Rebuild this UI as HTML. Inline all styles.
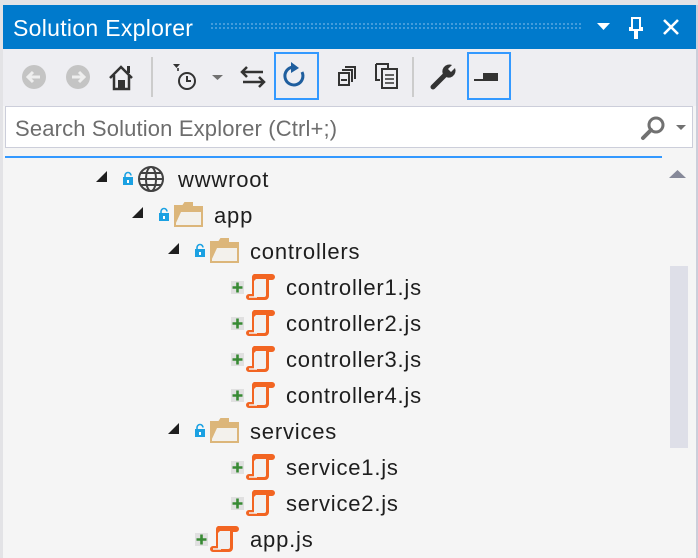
<!DOCTYPE html>
<html><head><meta charset="utf-8"><style>
*{margin:0;padding:0;box-sizing:border-box}
body{width:698px;height:558px;overflow:hidden;background:#e3e3e6;font-family:"Liberation Sans",sans-serif;position:relative}
.a{position:absolute}
.t{position:absolute;font-size:22px;letter-spacing:0.8px;color:#1e1e1e;line-height:24px;white-space:nowrap}
</style></head><body>
<div class="a" style="left:3px;top:5px;width:693px;height:553px;background:#f5f5f5"></div>
<div class="a" style="left:696px;top:5px;width:2px;height:553px;background:#ccceda"></div>
<div class="a" style="left:3px;top:5px;width:693px;height:44px;background:#007acc"></div>
<div class="t" style="left:13px;top:16px;color:#fff;font-size:23px;letter-spacing:0.3px">Solution Explorer</div>
<div class="a" style="left:210px;top:22px;width:372px;height:8px;background-image:radial-gradient(circle,#5aa8e0 0.8px,transparent 1px);background-size:4px 4px"></div>
<svg class="a" style="left:590px;top:10px" width="108" height="36">
<path d="M7 13h13l-6.5 7z" fill="#fff"/>
<path d="M42 8h8v10h2v2h-5v8h-2v-8h-5v-2h2z" fill="none" stroke="#fff" stroke-width="2"/>
<path d="M74 10l14 14M88 10l-14 14" stroke="#fff" stroke-width="2.6"/>
</svg>
<div class="a" style="left:3px;top:49px;width:693px;height:57px;background:#eeeef2"></div>
<svg class="a" style="left:3px;top:49px" width="693" height="57">
<circle cx="31" cy="28" r="12" fill="#c4c4c4"/><path d="M37 28h-11M30 23l-5 5 5 5" stroke="#eee" stroke-width="3" fill="none"/>
<circle cx="75" cy="28" r="12" fill="#c4c4c4"/><path d="M69 28h11M76 23l5 5-5 5" stroke="#eee" stroke-width="3" fill="none"/>
<path d="M107 29l11-11 11 11M111 26v14h15V26" fill="none" stroke="#333" stroke-width="2.5"/><rect x="115" y="31" width="7" height="9" fill="#333"/><rect x="124" y="17" width="3" height="7" fill="#333"/>
<rect x="148" y="8" width="2" height="40" fill="#ccc"/>
<path d="M170 15h7l-3.5 4z" fill="#333"/><path d="M175 19v3" stroke="#333" stroke-width="1.6"/>
<circle cx="184" cy="32" r="8" fill="none" stroke="#333" stroke-width="2"/><path d="M184 27v5h4" stroke="#333" stroke-width="2" fill="none"/>
<path d="M209 26h11l-5.5 5z" fill="#717171"/>
<path d="M240 23h20M244 18l-5 5 5 5M260 33h-20M256 28l5 5-5 5" stroke="#333" stroke-width="2.5" fill="none"/>
<rect x="272" y="4" width="43" height="46" fill="none" stroke="#3399ff" stroke-width="2"/>
<path d="M299 23a9 9 0 1 1-9-5" fill="none" stroke="#1f5e9e" stroke-width="3"/><path d="M288 13l8 6-8 5z" fill="#1f5e9e"/>
<path d="M336 24h10v12h-10zM339 21h10v12M342 18h10v12" fill="none" stroke="#333" stroke-width="2"/><path d="M338 31h6" stroke="#333" stroke-width="2"/>
<path d="M373 15h12v4M373 15v16h4M379 20h15v19h-15z" fill="none" stroke="#333" stroke-width="2"/><path d="M382 26h9M382 30h9M382 34h9" stroke="#333" stroke-width="1.5"/>
<rect x="409" y="8" width="2" height="40" fill="#ccc"/>
<path d="M430 38l11-11" stroke="#333" stroke-width="5" stroke-linecap="round"/><path d="M441 27a7 7 0 0 1 8-11l-4 4 3 3 4-4a7 7 0 0 1-11 8z" fill="#333"/>
<rect x="465" y="4" width="42" height="46" fill="none" stroke="#3399ff" stroke-width="2"/>
<rect x="471" y="30" width="10" height="2" fill="#333"/><rect x="480" y="24" width="15" height="8" fill="#333"/>
</svg>
<div class="a" style="left:5px;top:106px;width:688px;height:42px;background:#fff;border:1px solid #ccceda"></div>
<div class="t" style="left:15px;top:117px;color:#6d6d6d;letter-spacing:0.15px">Search Solution Explorer (Ctrl+;)</div>
<svg class="a" style="left:636px;top:112px" width="60" height="32">
<circle cx="20" cy="13" r="7" fill="none" stroke="#717171" stroke-width="3"/><path d="M15 18l-8 8" stroke="#717171" stroke-width="4" stroke-linecap="round"/>
<path d="M40 13h10l-5 5z" fill="#717171"/>
</svg>
<div class="a" style="left:5px;top:156px;width:657px;height:2px;background:#3399ff"></div>
<svg class="a" style="left:668px;top:167px" width="20" height="12"><path d="M1 11h17l-8.5-8z" fill="#868999"/></svg>
<div class="a" style="left:670px;top:266px;width:18px;height:182px;background:#dedfe8"></div>
<svg class="a" style="left:0;top:0" width="698" height="558">
<defs>
<g id="tri"><path d="M-1 11l11-11v11z" fill="#1e1e1e"/></g>
<g id="lock"><path d="M2 5v-1.5a3 3 0 0 1 6 0" fill="none" stroke="#1ba1e2" stroke-width="1.6"/><rect x="0" y="5" width="10" height="8" fill="#1ba1e2"/><rect x="4" y="8" width="2" height="3" fill="#fff"/></g>
<g id="fold"><path d="M1 4h8l2 -3h7v4h10v19H1z" fill="#dcb67a"/><path d="M7 10h20v13H1z" fill="#f3f1ec"/><path d="M1 4h8l2-3h7v4h10v19H1z" fill="none" stroke="#dcb67a" stroke-width="2"/></g>
<g id="js"><path d="M8 1h18a3 3 0 0 1 0 6h-3v16a4 4 0 0 1-4 4H3a3 3 0 0 1 0-6h3V5a4 4 0 0 1 2-4z" fill="#f26522"/><path d="M10 6h10v16a2 2 0 0 1-2 2H8V8z" fill="#f1f1f1"/><path d="M3 24h8" stroke="#f1f1f1" stroke-width="1.5"/></g>
<g id="plus"><rect x="0" y="0" width="13" height="13" fill="#e0e0e0"/><path d="M6.5 1.5v10M1.5 6.5h10" stroke="#388a34" stroke-width="2.6"/></g>
</defs>
<use href="#tri" x="97" y="171"/><use href="#lock" x="123" y="172"/>
<g transform="translate(137,165)"><circle cx="14" cy="14" r="12" fill="none" stroke="#424242" stroke-width="2"/><ellipse cx="14" cy="14" rx="5" ry="12" fill="none" stroke="#424242" stroke-width="2"/><path d="M2 14h24M4 8h20M4 20h20" stroke="#424242" stroke-width="2"/></g>
<use href="#tri" x="133" y="207"/><use href="#lock" x="159" y="208"/><use href="#fold" x="174" y="202"/>
<use href="#tri" x="169" y="243"/><use href="#lock" x="195" y="244"/><use href="#fold" x="210" y="238"/>
<use href="#plus" x="231" y="281"/><use href="#js" x="246" y="273"/>
<use href="#plus" x="231" y="317"/><use href="#js" x="246" y="309"/>
<use href="#plus" x="231" y="353"/><use href="#js" x="246" y="345"/>
<use href="#plus" x="231" y="389"/><use href="#js" x="246" y="381"/>
<use href="#tri" x="169" y="423"/><use href="#lock" x="195" y="424"/><use href="#fold" x="210" y="418"/>
<use href="#plus" x="231" y="461"/><use href="#js" x="246" y="453"/>
<use href="#plus" x="231" y="497"/><use href="#js" x="246" y="489"/>
<use href="#plus" x="195" y="533"/><use href="#js" x="210" y="525"/>
</svg>
<div class="t" style="left:178px;top:168px">wwwroot</div>
<div class="t" style="left:214px;top:204px">app</div>
<div class="t" style="left:250px;top:240px">controllers</div>
<div class="t" style="left:286px;top:276px">controller1.js</div>
<div class="t" style="left:286px;top:312px">controller2.js</div>
<div class="t" style="left:286px;top:348px">controller3.js</div>
<div class="t" style="left:286px;top:384px">controller4.js</div>
<div class="t" style="left:250px;top:420px">services</div>
<div class="t" style="left:286px;top:456px">service1.js</div>
<div class="t" style="left:286px;top:492px">service2.js</div>
<div class="t" style="left:250px;top:528px">app.js</div>
</body></html>
